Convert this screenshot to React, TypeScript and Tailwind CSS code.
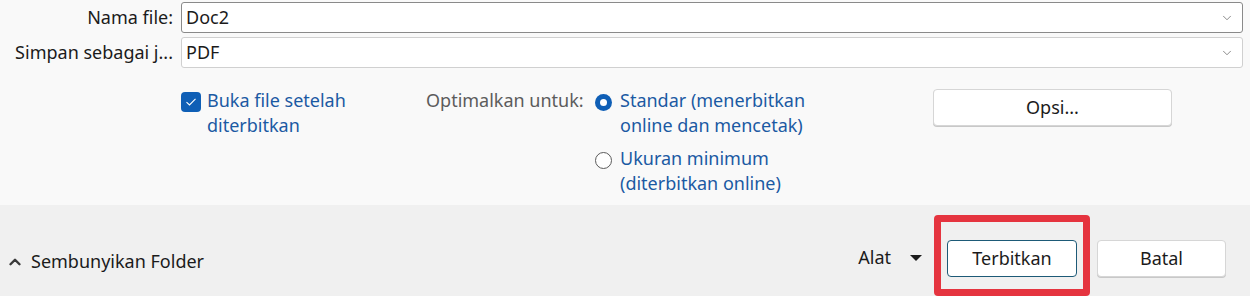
import { ChevronDown, ChevronUp } from "lucide-react";

const font = { fontFamily: '"Noto Sans", "Open Sans", sans-serif' };

function ComboBox({ value, active }: { value: string; active?: boolean }) {
    return (
        <div
            className={`flex h-[31px] items-center justify-between rounded-[3px] border bg-white pl-[4px] pr-[8px] text-[18px] text-[#1b1b1b] ${
                active ? "border-[#8a8a8a]" : "border-[#d0d0d0] bg-[#fdfdfd]"
            }`}
        >
            <span>{value}</span>
            <ChevronDown size={14} strokeWidth={1.2} className="text-[#5a5a5a]" />
        </div>
    );
}

function Radio({ checked }: { checked?: boolean }) {
    return checked ? (
        <span className="mt-[6px] flex h-[17px] w-[17px] shrink-0 items-center justify-center rounded-full bg-[#0f5fb6]">
            <span className="h-[7px] w-[7px] rounded-full bg-white" />
        </span>
    ) : (
        <span className="mt-[6px] h-[17px] w-[17px] shrink-0 rounded-full border border-[#5b5b5b] bg-white" />
    );
}

export default function App() {
    return (
        <div className="h-[296px] w-[1250px] overflow-hidden bg-[#f9f9f9]" style={font}>
            {/* Bagian atas */}
            <div className="h-[205px] pr-[7px] pt-[2px]">
                <div className="grid grid-cols-[173px_1fr] items-center gap-x-[8px] gap-y-[4px]">
                    <label className="whitespace-nowrap text-right text-[18px] text-[#1b1b1b]">Nama file:</label>
                    <ComboBox value="Doc2" active />
                    <label className="whitespace-nowrap text-right text-[18px] text-[#1b1b1b]">Simpan sebagai j...</label>
                    <ComboBox value="PDF" />
                </div>

                <div className="mt-[20px] flex">
                    {/* Checkbox */}
                    <div className="ml-[181px] flex w-[245px] items-start">
                        <span className="mt-[4px] flex h-[20px] w-[20px] shrink-0 items-center justify-center rounded-[4px] bg-[#0f5fb6]">
                            <svg width="12" height="10" viewBox="0 0 12 10" fill="none">
                                <path d="M1.5 5.2 L4.5 8 L10.5 1.8" stroke="white" strokeWidth="1.1" />
                            </svg>
                        </span>
                        <span className="ml-[6px] text-[18px] leading-[25px] text-[#1b5aa3]">
                            Buka file setelah
                            <br />
                            diterbitkan
                        </span>
                    </div>

                    {/* Optimalkan */}
                    <div className="flex">
                        <span className="w-[162px] whitespace-nowrap text-[18px] leading-[25px] text-[#5c5c5c]">Optimalkan untuk:</span>
                        <div className="ml-[7px] flex flex-col gap-[8px]">
                            <div className="flex items-start">
                                <Radio checked />
                                <span className="ml-[8px] text-[18px] leading-[25px] text-[#1b5aa3]">
                                    Standar (menerbitkan
                                    <br />
                                    online dan mencetak)
                                </span>
                            </div>
                            <div className="flex items-start">
                                <Radio />
                                <span className="ml-[8px] text-[18px] leading-[25px] text-[#1b5aa3]">
                                    Ukuran minimum
                                    <br />
                                    (diterbitkan online)
                                </span>
                            </div>
                        </div>
                    </div>

                    {/* Opsi */}
                    <div className="ml-auto mr-[71px] mt-[1px]">
                        <button className="h-[37px] w-[239px] rounded-[4px] border border-[#d6d6d6] bg-white text-[18px] text-[#1b1b1b] shadow-[0_1px_0_#c8c8c8]">
                            Opsi...
                        </button>
                    </div>
                </div>
            </div>

            {/* Bagian bawah */}
            <div className="flex h-[91px] bg-[#f0f0f0]">
                <div className="flex items-center self-end pb-[21px] pl-[6px]">
                    <ChevronUp size={18} strokeWidth={3.2} className="text-[#3a3a3a]" />
                    <span className="ml-[7px] text-[18px] text-[#1b1b1b]">Sembunyikan Folder</span>
                </div>

                <div className="ml-auto flex items-start pr-[24px] pt-[10px]">
                    <div className="mt-[29px] flex items-center">
                        <span className="text-[18px] text-[#1b1b1b]">Alat</span>
                        <svg width="12" height="6" viewBox="0 0 12 6" className="ml-[19px]">
                            <path d="M0 0 H12 L6 6 Z" fill="#1b1b1b" />
                        </svg>
                    </div>

                    {/* Kotak merah penanda */}
                    <div className="ml-[12px] h-[81px] rounded-[4px] border-[7px] border-[#e5343f] px-[6px] pt-[18px]">
                        <button className="h-[37px] w-[130px] rounded-[4px] border border-[#1d5a77] bg-white text-[18px] text-[#1b1b1b]">
                            Terbitkan
                        </button>
                    </div>

                    <button className="ml-[7px] mt-[25px] h-[37px] w-[129px] rounded-[4px] border border-[#d6d6d6] bg-white text-[18px] text-[#1b1b1b] shadow-[0_1px_0_#c8c8c8]">
                        Batal
                    </button>
                </div>
            </div>
        </div>
    );
}
